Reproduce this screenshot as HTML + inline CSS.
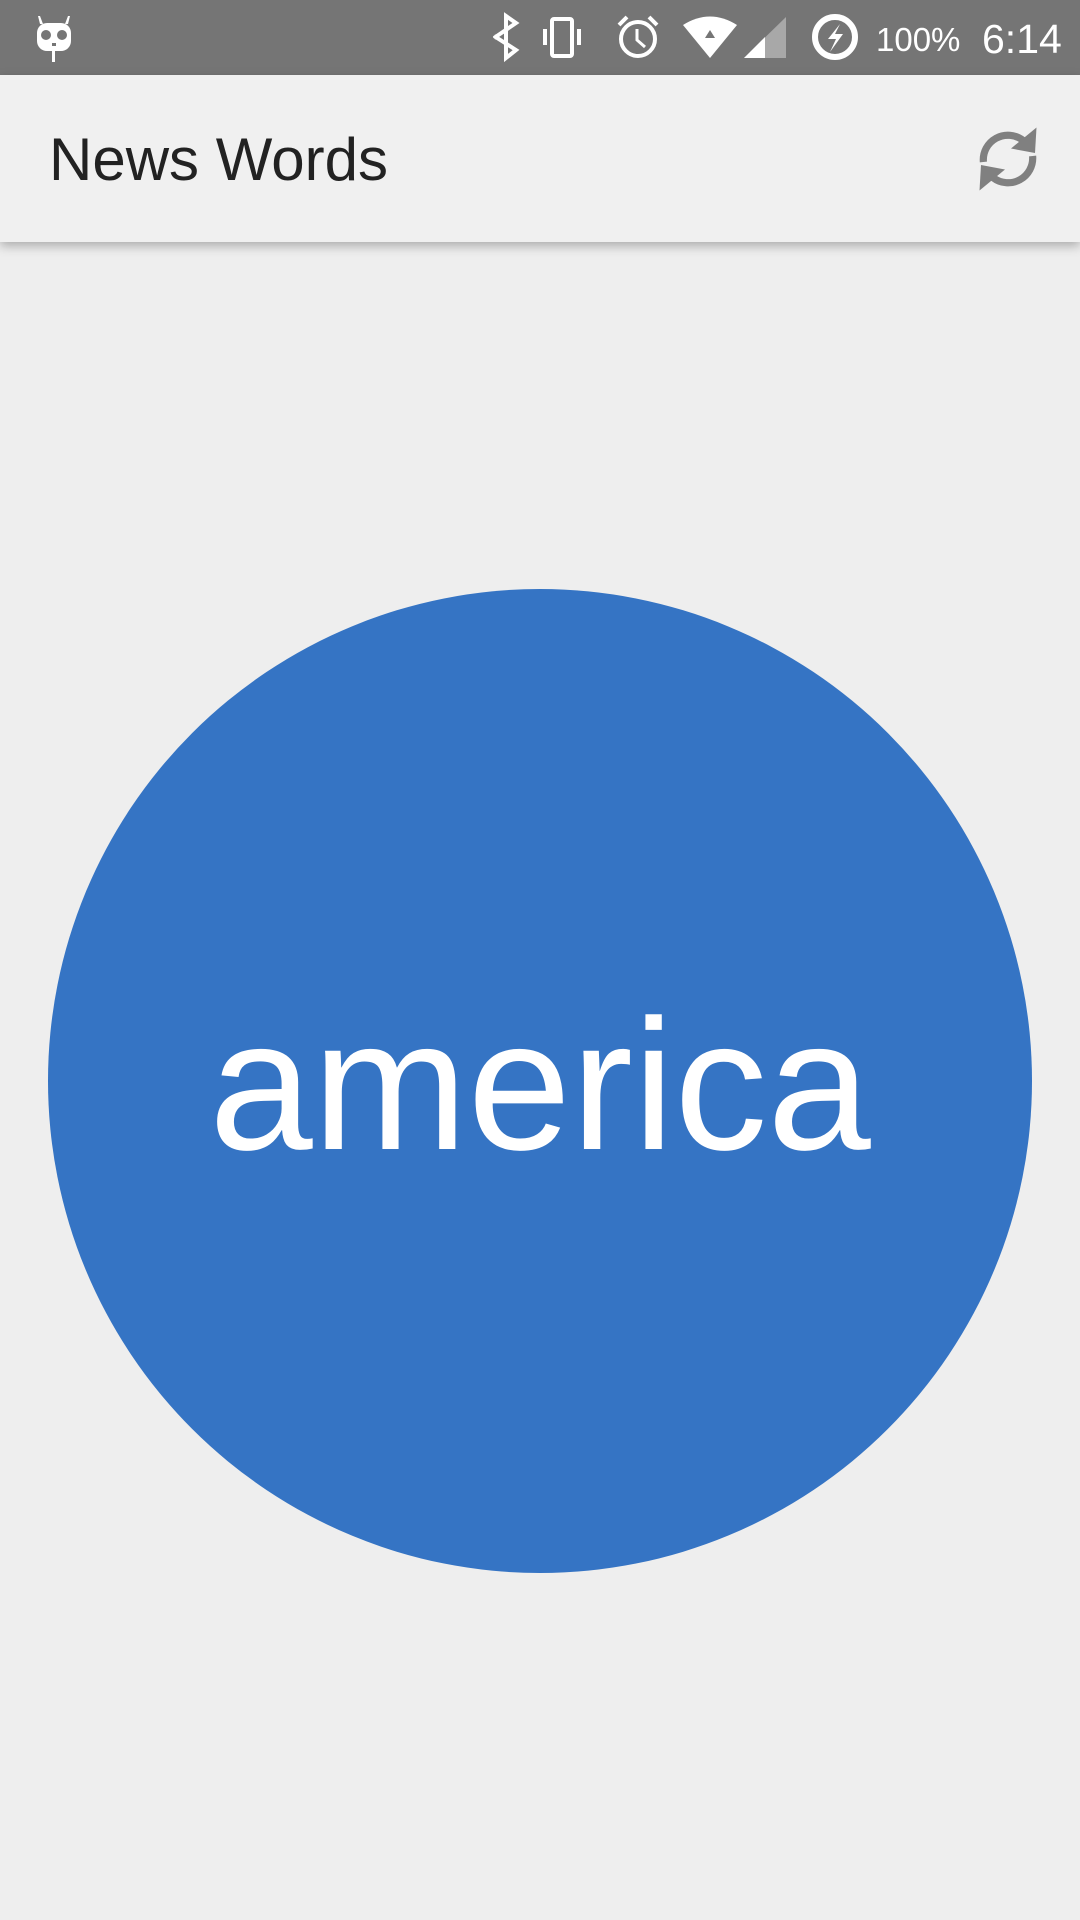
<!DOCTYPE html>
<html><head><meta charset="utf-8"><style>
html,body{margin:0;padding:0;width:1080px;height:1920px;background:#eeeeee;overflow:hidden;font-family:"Liberation Sans",sans-serif}
#sb{position:absolute;left:0;top:0;width:1080px;height:75px;background:#757575}
#ab{position:absolute;left:0;top:75px;width:1080px;height:167px;background:#f0f0f0;box-shadow:0 4px 10px rgba(0,0,0,0.28)}
#title{position:absolute;left:49px;top:55px;font-size:60px;color:#222;line-height:1}
#circle{position:absolute;left:48px;top:589px;width:984px;height:984px;border-radius:50%;background:#3574c4}
#word{position:absolute;left:0;top:0;width:984px;height:984px;display:flex;align-items:center;justify-content:center;color:#fff;font-size:186px;padding-top:8px;box-sizing:border-box}
.st{position:absolute;color:#fff;line-height:1}
</style></head><body>
<div id="sb">
<svg width="1080" height="75" style="position:absolute;left:0;top:0">
 <g fill="#fff"><rect x="37" y="23" width="34" height="28" rx="10"/><rect x="52" y="50" width="3" height="12"/><path d="M40 24 L38 16 L40 16 L43 24Z M68 24 L70 16 L68 16 L65 24Z"/></g>
 <circle cx="46" cy="35" r="5" fill="#757575"/><circle cx="62" cy="35" r="5" fill="#757575"/><rect x="52" y="43" width="4" height="3" fill="#757575"/>
 <path d="M494 38 L516 23 L506 16 V58 L516 50 L494 36" stroke="#fff" stroke-width="4" fill="none"/>
 <rect x="552" y="19" width="20" height="37" rx="2" stroke="#fff" stroke-width="4" fill="none"/>
 <rect x="543" y="29" width="4" height="16" fill="#fff"/><rect x="577" y="29" width="4" height="16" fill="#fff"/>
 <circle cx="638" cy="39" r="17" stroke="#fff" stroke-width="4" fill="none"/>
 <path d="M637 29 V40 L645 47" stroke="#fff" stroke-width="3" fill="none"/>
 <path d="M619 25 L627 17 M657 25 L649 17" stroke="#fff" stroke-width="4"/>
 <path d="M683 25 Q710 8 737 25 L710 58Z" fill="#fff"/>
 <path d="M710 30 L715 38 H705Z" fill="#757575"/>
 <path d="M744 58 L786 17 V58Z" fill="#a8a8a8"/><path d="M744 58 L765 37 V58Z" fill="#fff"/>
 <circle cx="835" cy="37" r="20" stroke="#fff" stroke-width="6" fill="none"/>
 <path d="M840 24 L828 39 H836 L830 52 L843 34 H835Z" fill="#fff"/>
</svg>
<div class="st" style="left:876px;top:23px;font-size:33px">100%</div>
<div class="st" style="left:982px;top:19px;font-size:41px">6:14</div>
</div>
<div id="ab">
<div id="title">News Words</div>
<svg width="72" height="76" viewBox="0 0 24 24" style="position:absolute;left:972px;top:46px">
 <path d="M3.8 13 A8.2 8.2 0 0 1 17 5.8" stroke="#808080" stroke-width="2.4" fill="none"/>
 <path d="M21.5 1.5 L21 10 L13 8.5Z" fill="#808080"/>
 <path d="M20.2 11 A8.2 8.2 0 0 1 7 18.2" stroke="#808080" stroke-width="2.4" fill="none"/>
 <path d="M2.5 22.5 L3 14 L11 15.5Z" fill="#808080"/>
</svg>
</div>
<div id="circle"><div id="word">america</div></div>
</body></html>
